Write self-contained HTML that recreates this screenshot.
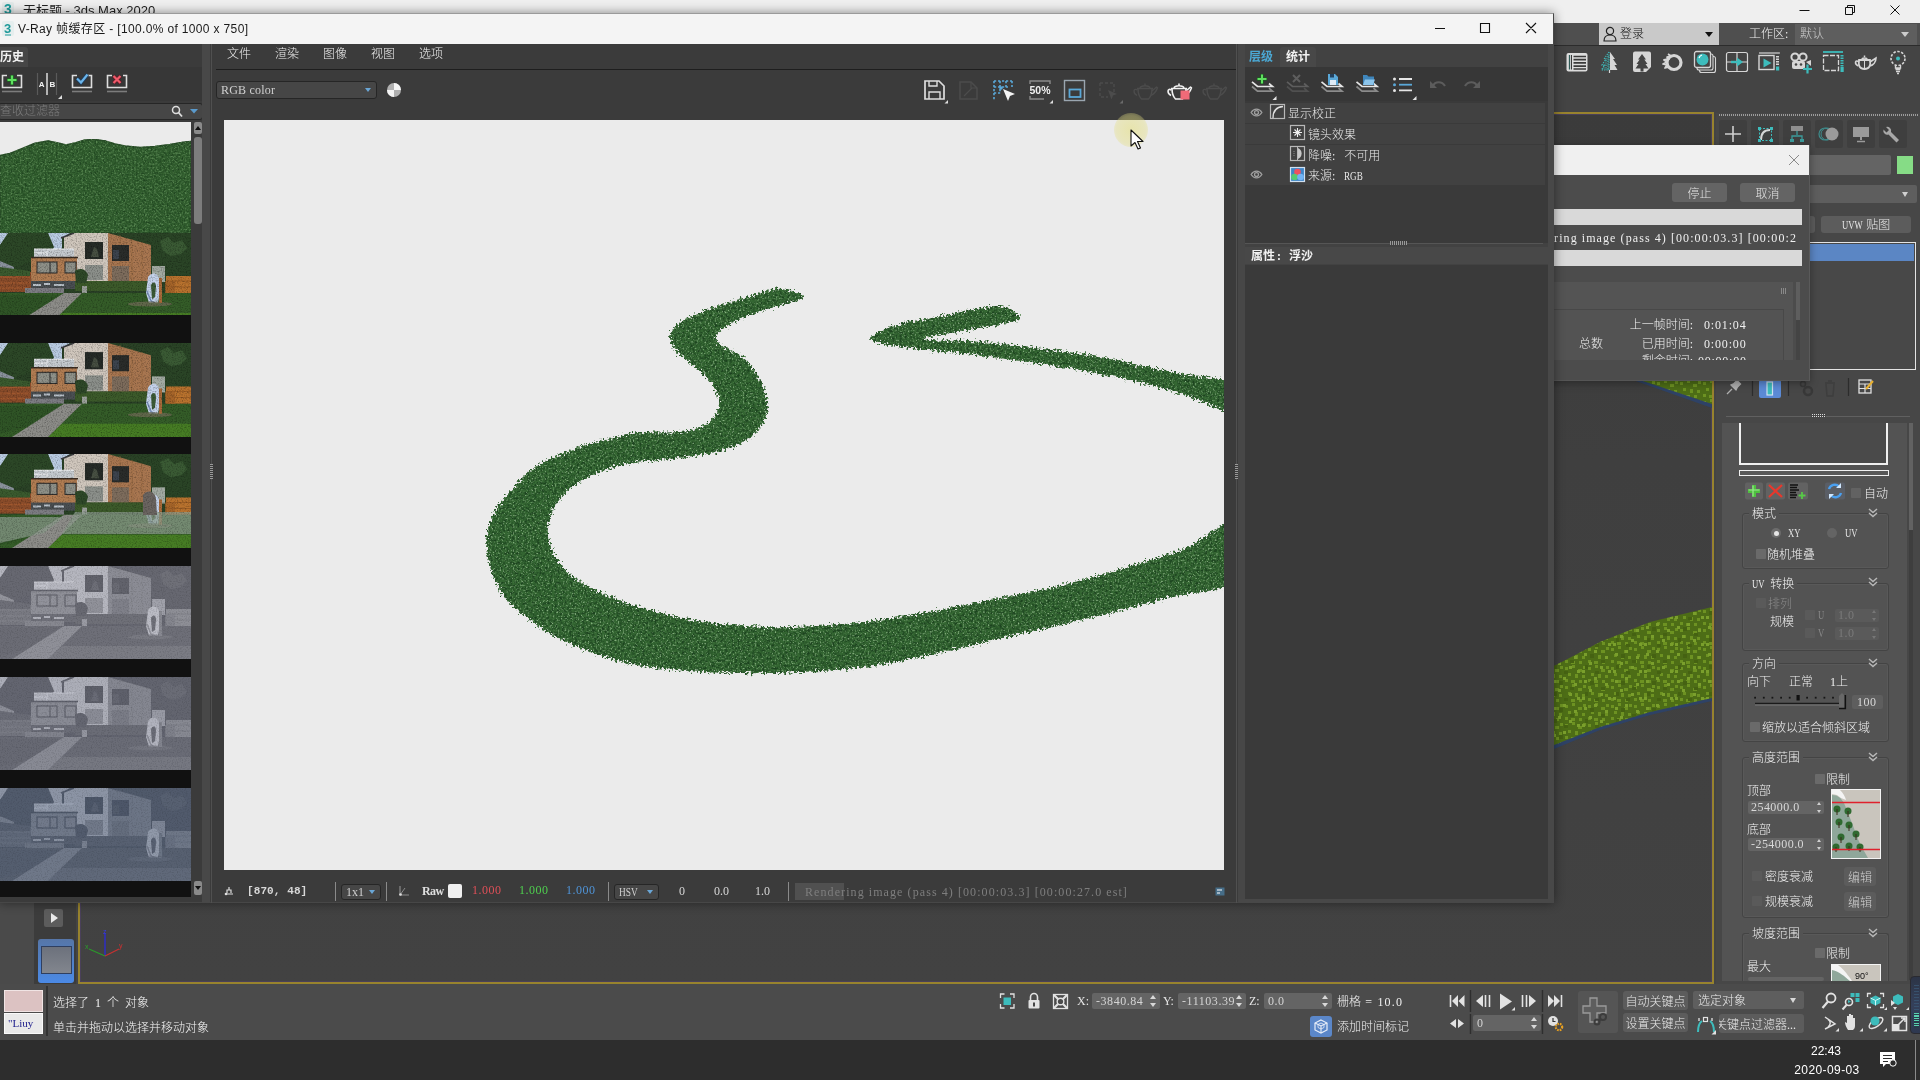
<!DOCTYPE html>
<html lang="zh-CN">
<head>
<meta charset="utf-8">
<title>V-Ray 帧缓存区</title>
<style>
*{box-sizing:border-box;margin:0;padding:0}
html,body{width:1920px;height:1080px;overflow:hidden;background:#444}
body{will-change:transform;position:relative;font:300 12px/14px "Liberation Serif","Noto Sans CJK SC",serif;color:#e6e6e6}
.a{position:absolute}
.t{position:absolute;white-space:nowrap;line-height:14px}
.ui{font-family:"Liberation Sans","Noto Sans CJK SC",sans-serif;font-weight:400}
svg{position:absolute;overflow:visible}
/* ---------- main 3ds max window ---------- */
#max{left:0;top:0;width:1920px;height:1040px;background:#444}
#mtitle{left:0;top:0;width:1920px;height:23px;background:#efefef}
#mmenu{left:0;top:23px;width:1920px;height:23px;background:#4f4f4f;border-bottom:1px solid #2c2c2c}
#mtool{left:0;top:46px;width:1920px;height:67px;background:#444}
#vp{left:78px;top:112px;width:1636px;height:872px;border:2px solid #98832e;box-shadow:inset 0 0 0 1px #4a405a;background:linear-gradient(#3b3b3b,#3f3f3f 40%,#424242)}
#cmd{left:1716px;top:113px;width:204px;height:868px;background:#444}
#status{left:0;top:984px;width:1920px;height:56px;background:#4b4b4b}
#taskbar{left:0;top:1040px;width:1920px;height:40px;background:#2d2d2d}

/* main top */
.wc{stroke:#111;stroke-width:1;fill:none}
#login{left:1599px;top:0px;width:120px;height:22px;background:#c9c9c9;color:#111}
#wsdd{left:1795px;top:1px;width:122px;height:21px;background:#5e5e5e}
.tb{position:absolute;top:50px;width:26px;height:26px}

/* command panel (page coords) */
#cp{left:0;top:0;width:0;height:0}
#cmd{background:#474747}
.grp{position:absolute;border:1px solid #444;border-radius:3px;box-shadow:inset 0 0 0 1px #595959}
.gl{position:absolute;white-space:nowrap;line-height:14px;background:#535353;padding:0 3px;color:#f0f0f0}
.cb{position:absolute;width:10px;height:10px;background:#6a6a6a;border-radius:1px}
.cb.d{background:#5a5a5a}
.sp{letter-spacing:.45px;position:absolute;background:#646464;border-radius:2px;color:#d8d8d8;line-height:13px;height:13px;padding-left:3px;font-size:12px;white-space:nowrap}
.sp.d{background:#5a5a5a;color:#7a7a7a}
.sp i{position:absolute;right:3px;width:0;height:0;border:2.5px solid transparent}
.sp i.u{top:1px;border-bottom:3px solid #d0d0d0;border-top:0}
.sp i.dn{bottom:1px;border-top:3px solid #d0d0d0;border-bottom:0}
.sp.d i.u{border-bottom-color:#777}.sp.d i.dn{border-top-color:#777}
.btn{position:absolute;background:#646464;border-radius:3px;text-align:center;color:#e8e8e8;white-space:nowrap}
.dis{color:#8a8a8a}

/* status (page coords via #st) */
#st{left:0;top:0;width:0;height:0}
.fld{letter-spacing:.55px;position:absolute;background:#646464;border-radius:2px;color:#d4d4d4;height:16px;line-height:16px;padding-left:4px;white-space:nowrap}
.fld i{position:absolute;right:4px;width:0;height:0;border:3px solid transparent}
.fld i.u{top:2px;border-bottom:4px solid #d8d8d8;border-top:0}
.fld i.dn{bottom:2px;border-top:4px solid #d8d8d8;border-bottom:0}

/* render progress dialog */
#dlg{left:1400px;top:145px;width:410px;height:236px;background:#4c4c4c;border-right:1px solid #5a5a5a;border-bottom:1px solid #555;box-shadow:0 2px 8px rgba(0,0,0,.35)}

#vray .t{color:#e4e4e4}
.vdd{position:absolute;background:#464646;border:1px solid #262626;border-radius:3px;color:#d0d0d0;line-height:14px;padding-left:4px;white-space:nowrap}
.vdd i{position:absolute;right:5px;top:5px;width:0;height:0;border:3.5px solid transparent;border-top:4.5px solid #6aa6d6;border-bottom:0}
.vsep{position:absolute;width:1px;background:#8a8a8a;top:868px;height:19px}
.lrow{position:absolute;left:1245px;width:300px;height:20px;background:#414141}
.cap{display:inline-block;transform:scaleX(.72);transform-origin:0 50%}
/* ---------- vray window ---------- */
#vray{left:-1px;top:13px;width:1555px;height:890px;background:#3b3b3b;border:1px solid #474747;border-top-color:#9a9a9a;box-shadow:0 0 10px rgba(0,0,0,.45)}
#vtitle{left:0;top:0;width:1553px;height:30px;background:#f4f4f4}
</style>
</head>
<body>
<div id="max" class="a">
  <div id="mtitle" class="a">
    <svg class="a" style="left:2px;top:2px" width="14" height="14" viewBox="0 0 14 14"><rect x="0" y="0" width="12" height="13" rx="2" fill="#e2e8e8"/><text x="2" y="12" font-family="Liberation Sans,sans-serif" font-weight="bold" font-size="14" fill="#1f9a9a">3</text></svg>
    <div class="t ui" style="left:23px;top:3px;font-size:13px;line-height:16px;color:#222">无标题 - 3ds Max 2020</div>
    <svg class="a" style="left:1790px;top:0" width="130" height="23" viewBox="0 0 130 23"><path class="wc" d="M9.5 10.5h10M55.5 7.5h7v7h-7zM57.5 7.5v-2h7v7h-2M100.500 5.500l9 9M109.500 5.500l-9 9"/></svg>
</div>
  <div id="mmenu" class="a">
    <div id="login" class="a"><svg class="a" style="left:4px;top:3px" width="14" height="16" viewBox="0 0 14 16"><circle cx="7" cy="5" r="3.6" fill="none" stroke="#222" stroke-width="1.2"/><path d="M1 15c0-4 2.500-6 6-6s6 2 6 6z" fill="none" stroke="#222" stroke-width="1.2"/></svg><div class="t" style="left:21px;top:4px">登录</div><div class="a" style="left:106px;top:9px;border:4px solid transparent;border-top:5px solid #111;border-bottom:0"></div></div>
    <div class="t" style="left:1749px;top:4px;color:#eee">工作区:</div>
    <div id="wsdd" class="a"><div class="t" style="left:5px;top:3px;color:#c8c8c8">默认</div><div class="a" style="left:106px;top:8px;border:4px solid transparent;border-top:5px solid #ccc;border-bottom:0"></div></div>
</div>
  <div id="mtool" class="a">
<svg class="a" style="left:1565px;top:4px" width="24" height="24" viewBox="0 0 24 24"><rect x="1.500" y="3" width="21" height="18.500" rx="2" fill="#dcdcdc"/><path d="M4.500 5v14.500" stroke="#2f5a56" stroke-width="1.300"/><path d="M6.500 5v14.500" stroke="#3a3a3a" stroke-width="1"/><path d="M8.500 6.500h12.500M8.500 9.700h12.500M8.500 12.900h12.500M8.500 16.100h12.500M8.500 19h12.500" stroke="#3a3a3a" stroke-width="1.700"/></svg>
<svg class="a" style="left:1597.5px;top:4px" width="24" height="24" viewBox="0 0 24 24"><path d="M12 2l5 7h-2l4 6h-2.500l3 5H12z" fill="#d6d6d6"/><path d="M11 2l-5 7h2l-4 6h2.500l-3 5H11z" fill="none" stroke="#3dbcbc" stroke-width="1.2" stroke-dasharray="1.2 1.200"/><path d="M10 6v14M8 10v10M6 15v5" stroke="#3dbcbc" stroke-width="1.2" stroke-dasharray="1.2 1.200"/><path d="M11.500 20v3" stroke="#d6d6d6" stroke-width="1.2"/></svg>
<svg class="a" style="left:1629.5px;top:4px" width="24" height="24" viewBox="0 0 24 24"><path d="M3 3.500a2 2 0 0 1 2-2h14a2 2 0 0 1 2 2V17l-5 5H5a2 2 0 0 1-2-2z" fill="#d6d6d6"/><path d="M12 4l4 5.500h-1.700l3.200 4.500h-2l3 4.500h-5v3h-3v-3h-5l3-4.500h-2l3.200-4.500H8z" fill="#444"/></svg>
<svg class="a" style="left:1661px;top:4px" width="24" height="24" viewBox="0 0 24 24"><circle cx="13" cy="12.500" r="7" fill="none" stroke="#d6d6d6" stroke-width="3.200"/><path d="M7 4l3 2-4 1 2 2-5 1 3 2-4 2 4 1-2 3 4-1" fill="none" stroke="#d6d6d6" stroke-width="1.8" stroke-linejoin="round"/></svg>
<svg class="a" style="left:1693px;top:4px" width="24" height="24" viewBox="0 0 24 24"><rect x="6.500" y="6.500" width="16" height="16" rx="2" fill="#444" stroke="#d6d6d6" stroke-width="1.1"/><rect x="4" y="4" width="16" height="16" rx="2" fill="#444" stroke="#d6d6d6" stroke-width="1.1"/><rect x="1.500" y="1.500" width="16" height="16" rx="2" fill="#444" stroke="#d6d6d6" stroke-width="1.3"/><circle cx="9.500" cy="9.500" r="6" fill="#3dbcbc"/><path d="M6 8a4 4 0 0 1 3-3" stroke="#fff" stroke-width="1.2" fill="none"/></svg>
<svg class="a" style="left:1725px;top:4px" width="24" height="24" viewBox="0 0 24 24"><rect x="1.500" y="2.500" width="21" height="19" rx="2" fill="none" stroke="#d6d6d6" stroke-width="1.2"/><path d="M12 2.500v19M1.500 12h21" stroke="#d6d6d6" stroke-width="1.200"/><path d="M6 12h8" stroke="#3dbcbc" stroke-width="2.400"/><path d="M12 7.500l6 4.500-6 4.500z" fill="#3dbcbc"/></svg>
<svg class="a" style="left:1757px;top:4px" width="24" height="24" viewBox="0 0 24 24"><path d="M2 3h21" stroke="#d6d6d6" stroke-width="1.200"/><rect x="2" y="5.500" width="15" height="14" fill="none" stroke="#d6d6d6" stroke-width="1.400"/><path d="M6.500 8.500l8 4.500-8 4.500z" fill="#3dbcbc"/><path d="M20.500 6v10" stroke="#d6d6d6" stroke-width="3" stroke-dasharray="1.5 1"/><rect x="19" y="16.500" width="3.200" height="4" fill="#3dbcbc"/></svg>
<svg class="a" style="left:1789px;top:4px" width="24" height="24" viewBox="0 0 24 24"><circle cx="6" cy="7" r="3.600" fill="none" stroke="#d6d6d6" stroke-width="2"/><circle cx="14" cy="7" r="3.600" fill="none" stroke="#d6d6d6" stroke-width="2"/><rect x="3" y="11" width="13" height="8" rx="2" fill="#d6d6d6"/><circle cx="7" cy="14.500" r="1.300" fill="#444"/><circle cx="12" cy="14.500" r="1.300" fill="#444"/><path d="M17 12l5-2v6z" fill="#d6d6d6"/><path d="M18.500 14.500v9M14 19h9" stroke="#3dbcbc" stroke-width="2.200"/></svg>
<svg class="a" style="left:1821px;top:4px" width="24" height="24" viewBox="0 0 24 24"><path d="M2 2h20" stroke="#3dbcbc" stroke-width="1.800"/><rect x="2.500" y="5.500" width="15" height="15" fill="none" stroke="#d6d6d6" stroke-width="1.300" stroke-dasharray="5 1.500"/><path d="M21 5v12" stroke="#3dbcbc" stroke-width="3" stroke-dasharray="1.5 1"/><rect x="19.500" y="17" width="3.200" height="5" fill="#3dbcbc"/></svg>
<svg class="a" style="left:1853px;top:4px" width="24" height="24" viewBox="0 0 24 24"><path d="M6 10h11c1 6-1 9-5.500 9S5 16 6 10z" fill="none" stroke="#d6d6d6" stroke-width="1.800"/><path d="M6 12c-4-3-5 2-0.500 4M17 12l6-4c0 4-3 7-6 8" fill="none" stroke="#d6d6d6" stroke-width="1.600"/><path d="M9 9.500c0-2 5-2 5 0M11.500 7v-1.500" stroke="#d6d6d6" stroke-width="1.500" fill="none"/><path d="M11.500 10v9" stroke="#d6d6d6" stroke-width="1"/></svg>
<svg class="a" style="left:1885.5px;top:4px" width="24" height="24" viewBox="0 0 24 24"><circle cx="12" cy="8.500" r="7" fill="none" stroke="#d6d6d6" stroke-width="1.600" stroke-dasharray="2.5 1.500"/><circle cx="12" cy="8.500" r="2" fill="#3dbcbc"/><path d="M9.500 15v3h5v-3M9.500 19.500h5M10 21.500h4M11 23.500h2" stroke="#d6d6d6" stroke-width="1.400" fill="none"/></svg>
</div>
  <div id="vp" class="a"></div>
  <div id="cmd" class="a"></div>
  <svg class="a" style="left:1554px;top:113px;overflow:hidden" width="158" height="868" viewBox="1554 113 158 868">
<defs><pattern id="px" width="23" height="19" patternUnits="userSpaceOnUse"><rect width="23" height="19" fill="#4d6d16"/><g fill="#6d9222"><rect x="1" y="2" width="3" height="3"/><rect x="8" y="0" width="3" height="3"/><rect x="14" y="4" width="4" height="3"/><rect x="19" y="1" width="3" height="3"/><rect x="4" y="8" width="3" height="3"/><rect x="11" y="9" width="3" height="4"/><rect x="18" y="10" width="3" height="3"/><rect x="1" y="14" width="3" height="3"/><rect x="7" y="15" width="4" height="3"/><rect x="15" y="15" width="3" height="3"/></g></pattern><pattern id="px2" width="31" height="27" patternUnits="userSpaceOnUse"><g fill="#7a9f2c"><rect x="3" y="5" width="3" height="3"/><rect x="13" y="2" width="3" height="3"/><rect x="24" y="8" width="3" height="3"/><rect x="8" y="14" width="3" height="3"/><rect x="19" y="18" width="3" height="3"/><rect x="27" y="22" width="3" height="3"/><rect x="1" y="22" width="3" height="3"/></g><g fill="#456212"><rect x="9" y="6" width="4" height="4"/><rect x="20" y="12" width="4" height="3"/><rect x="4" y="17" width="3" height="4"/><rect x="14" y="23" width="4" height="3"/></g></pattern></defs>
<path d="M1554 670l46-26 50-21 62-14v92l-62 14-50 15-46 19z" fill="#2e4266"/>
<path d="M1554 666l46-24 50-20 62-15v91l-62 14-50 15-46 18z" fill="url(#px)"/><path d="M1554 666l46-24 50-20 62-15v91l-62 14-50 15-46 18z" fill="url(#px2)"/>
<path d="M1633 380h79v28z" fill="#2e4266"/><path d="M1640 380h72v24z" fill="url(#px)"/>
</svg>
<div id="cp" class="a">
<div class="a" style="left:1719px;top:114px;width:199px;height:2px;background:repeating-linear-gradient(90deg,#9c9c9c 0 1px,#474747 1px 2px)"></div>
<div class="a" style="left:1719px;top:120px;width:28px;height:28px;background:#3f3f3f;border-radius:2px"></div><div class="a" style="left:1751px;top:120px;width:28px;height:28px;background:#3f3f3f;border-radius:2px"></div><div class="a" style="left:1783px;top:120px;width:28px;height:28px;background:#3f3f3f;border-radius:2px"></div><div class="a" style="left:1815px;top:120px;width:28px;height:28px;background:#3f3f3f;border-radius:2px"></div><div class="a" style="left:1847px;top:120px;width:28px;height:28px;background:#3f3f3f;border-radius:2px"></div><div class="a" style="left:1879px;top:120px;width:28px;height:28px;background:#3f3f3f;border-radius:2px"></div>
<svg class="a" style="left:1720px;top:120px" width="190" height="28" viewBox="1720 120 190 28">
<path d="M1733 126v16M1725 134h16" stroke="#cfcfcf" stroke-width="1.6"/>
<rect x="1759.500" y="128.500" width="12" height="12" fill="none" stroke="#3dbcbc" stroke-width="1" stroke-dasharray="2 1.500"/><path d="M1761 140c0-6 3-10 9-10" fill="none" stroke="#d6d6d6" stroke-width="2"/><path d="M1758 127h3v3h-3zM1770 127h3v3h-3zM1758 139h3v3h-3zM1770 139h3v3h-3z" fill="#3dbcbc"/>
<rect x="1791" y="126" width="12" height="5" fill="#8e8e8e"/><path d="M1797 131v4M1792 140v-4h10v4" fill="none" stroke="#3d9c9c" stroke-width="1.300"/><rect x="1790" y="139" width="4" height="3" fill="#3d9c9c"/><rect x="1800" y="139" width="4" height="3" fill="#3d9c9c"/>
<circle cx="1825" cy="134" r="6" fill="none" stroke="#3d8c8c" stroke-width="1.200"/><circle cx="1827" cy="134" r="6" fill="none" stroke="#3d8c8c" stroke-width="1"/><circle cx="1832" cy="134" r="6.500" fill="#9a9a9a"/>
<rect x="1853" y="127" width="16" height="10" fill="#9a9a9a"/><path d="M1857 141.500h8" stroke="#9a9a9a" stroke-width="1.500"/><path d="M1861 137v3" stroke="#9a9a9a" stroke-width="2"/>
<path d="M1886 127a4 4 0 0 1 5 5l8 8-2.500 2.500-8-8a4 4 0 0 1-5-5l3 3 2.500-2.500z" fill="#a8a8a8"/>
</svg>
<div class="a" style="left:1724px;top:155px;width:167px;height:20px;background:#646464;border-radius:2px"></div>
<div class="a" style="left:1897px;top:156px;width:16px;height:18px;background:#86dc86"></div>
<div class="a" style="left:1724px;top:185px;width:193px;height:18px;background:#5e5e5e;border-radius:2px"><div class="a" style="left:178px;top:7px;border:3.5px solid transparent;border-top:5px solid #d0d0d0;border-bottom:0"></div></div>
<div class="btn" style="left:1724px;top:216px;width:91px;height:17px;background:#5c5c5c"></div>
<div class="btn" style="left:1821px;top:216px;width:90px;height:17px;background:#5c5c5c;line-height:19px"><span class="cap" style="margin-right:-7px">UVW</span> 贴图</div>
<div class="a" style="left:1724px;top:242px;width:192px;height:128px;background:#484848;border:1px solid #e4e4e4"><div class="a" style="left:1px;top:1px;width:188px;height:17px;background:#5b86c4"></div></div>
<svg class="a" style="left:1720px;top:376px" width="190" height="26" viewBox="1720 376 190 26">
<path d="M1727 394l5-5M1731 385l5 5 1.500-3 3-3-3.500-3.500-3 3z" stroke="#b0b0b0" stroke-width="1.300" fill="#b0b0b0"/>
<path d="M1752.500 378v18M1788.500 378v18M1848.500 378v18" stroke="#2c2c2c" stroke-width="1.200"/>
<rect x="1759" y="379.500" width="22" height="18.500" rx="2" fill="#5b8ad6"/><rect x="1767" y="382" width="5.500" height="13" fill="#3dbcbc" stroke="#cfe0f0" stroke-width="1.200"/>
<circle cx="1803" cy="384" r="2.500" fill="none" stroke="#383838" stroke-width="1.500"/><circle cx="1808" cy="391" r="4" fill="none" stroke="#383838" stroke-width="2.500"/>
<path d="M1825 383h10M1826 384l1 12h6l1-12M1828 381h4" stroke="#3e3e3e" stroke-width="1.500" fill="none"/>
<rect x="1859" y="380" width="12" height="13" fill="none" stroke="#e0e0e0" stroke-width="1.300"/><path d="M1859 384h12M1865 384v9M1859 388.500h12" stroke="#e0e0e0" stroke-width="1.200"/><path d="M1866 389l7-8" stroke="#e8b030" stroke-width="2"/>
</svg>
<div class="a" style="left:1726px;top:416px;width:184px;height:1px;background:#606060"></div>
<div class="a" style="left:1811px;top:413px;width:15px;height:5px;background:#474747"><div class="a" style="left:1px;top:1px;width:13px;height:0;border-top:1px dotted #ddd"></div><div class="a" style="left:1px;top:3px;width:13px;height:0;border-top:1px dotted #ddd"></div></div>
<div class="a" style="left:1722px;top:423px;width:185px;height:558px;background:#535353"></div>
<div class="a" style="left:1909px;top:423px;width:4px;height:107px;background:#626262"></div>
<div class="a" style="left:1909px;top:530px;width:4px;height:450px;background:#3e3e3e"></div>
<div class="a" style="left:1739px;top:423px;width:149px;height:42px;background:#4a4a4a;border:2px solid #f0f0f0;border-top:0"></div>
<div class="a" style="left:1739px;top:470px;width:150px;height:6px;background:#585858;border:1px solid #f0f0f0"></div>
<svg class="a" style="left:1744px;top:482px" width="104" height="18" viewBox="1744 482 104 18">
<rect x="1745" y="482.500" width="18" height="17" rx="2" fill="#626262"/><path d="M1754 485v12M1748 491h12" stroke="#4fc040" stroke-width="4"/><path d="M1753 485.500v11M1748.500 490h11" stroke="#9be890" stroke-width="1.200"/>
<rect x="1766" y="482.500" width="19" height="17" rx="2" fill="#626262"/><path d="M1769 485l13 12M1782 485l-13 12" stroke="#e8382c" stroke-width="2.200"/>
<rect x="1788" y="482.500" width="20" height="17" rx="2" fill="#626262"/><path d="M1790 485h8M1790 487.500h7M1790 490h9M1790 492.500h6M1790 495h7M1790 497.500h6" stroke="#111" stroke-width="1.300"/><path d="M1802 492v7M1798.500 495.500h7" stroke="#58c848" stroke-width="1.800"/>
<rect x="1825" y="482.500" width="20" height="17" rx="2" fill="#5a5e66"/><path d="M1829 489a6 6 0 0 1 10-2.500" fill="none" stroke="#4aa0f0" stroke-width="2.400"/><path d="M1841 493a6 6 0 0 1-10 2.500" fill="none" stroke="#4aa0f0" stroke-width="2.400"/><path d="M1841 483v5h-5zM1829 499v-5h5z" fill="#d0e8ff"/>
</svg>
<div class="cb" style="left:1851px;top:488px;background:#626262"></div><div class="t" style="left:1864px;top:487px;color:#f0f0f0">自动</div>
<div class="grp" style="left:1742px;top:513px;width:147px;height:56px"></div><div class="gl" style="left:1749px;top:507px">模式</div><svg class="a" style="left:1868px;top:508px" width="10" height="10" viewBox="0 0 10 10"><path d="M1 1l4 3.500 4-3.500M1 5l4 3.500 4-3.500" fill="none" stroke="#b8b8b8" stroke-width="1.5"/></svg>
<div class="a" style="left:1771px;top:528px;width:10px;height:10px;border-radius:5px;background:#6c6c6c"><div class="a" style="left:2.5px;top:2.5px;width:5px;height:5px;border-radius:3px;background:#e6e6e6"></div></div><div class="t" style="left:1788px;top:526px"><span class="cap">XY</span></div>
<div class="a" style="left:1827px;top:528px;width:10px;height:10px;border-radius:5px;background:#646464"></div><div class="t" style="left:1845px;top:526px"><span class="cap">UV</span></div>
<div class="cb" style="left:1756px;top:549px"></div><div class="t" style="left:1767px;top:548px;color:#f0f0f0">随机堆叠</div>
<div class="grp" style="left:1742px;top:583px;width:147px;height:68px"></div><div class="gl" style="left:1749px;top:577px"><span class="cap" style="margin-right:-2px">UV</span> 转换</div><svg class="a" style="left:1868px;top:577px" width="10" height="10" viewBox="0 0 10 10"><path d="M1 1l4 3.500 4-3.500M1 5l4 3.500 4-3.500" fill="none" stroke="#b8b8b8" stroke-width="1.5"/></svg>
<div class="cb d" style="left:1756px;top:598px"></div><div class="t dis" style="left:1768px;top:597px">排列</div>
<div class="t" style="left:1770px;top:615px;color:#f0f0f0">规模</div>
<div class="cb d" style="left:1805px;top:610px"></div><div class="t dis" style="left:1818px;top:608px"><span class="cap">U</span></div><div class="sp d" style="left:1835px;top:609px;width:44px">1.0<i class="u"></i><i class="dn"></i></div>
<div class="cb d" style="left:1805px;top:628px"></div><div class="t dis" style="left:1818px;top:626px"><span class="cap">V</span></div><div class="sp d" style="left:1835px;top:627px;width:44px">1.0<i class="u"></i><i class="dn"></i></div>
<div class="grp" style="left:1742px;top:663px;width:147px;height:79px"></div><div class="gl" style="left:1749px;top:657px">方向</div><svg class="a" style="left:1868px;top:658px" width="10" height="10" viewBox="0 0 10 10"><path d="M1 1l4 3.500 4-3.500M1 5l4 3.500 4-3.500" fill="none" stroke="#b8b8b8" stroke-width="1.5"/></svg>
<div class="t" style="left:1747px;top:675px;color:#f0f0f0;background:#535353">向下</div><div class="t" style="left:1789px;top:675px;color:#f0f0f0">正常</div><div class="t" style="left:1830px;top:675px;color:#f0f0f0">1上</div>
<svg class="a" style="left:1750px;top:690px" width="100" height="22" viewBox="1750 690 100 22"><rect x="1754.2" y="696.800" width="1.800" height="1.800" fill="#161616"/><rect x="1762.9" y="696.800" width="1.800" height="1.800" fill="#161616"/><rect x="1771.5" y="696.800" width="1.800" height="1.800" fill="#161616"/><rect x="1780.2" y="696.800" width="1.800" height="1.800" fill="#161616"/><rect x="1788.8" y="696.800" width="1.800" height="1.800" fill="#161616"/><rect x="1806.2" y="696.800" width="1.800" height="1.800" fill="#161616"/><rect x="1814.8" y="696.800" width="1.800" height="1.800" fill="#161616"/><rect x="1823.5" y="696.800" width="1.800" height="1.800" fill="#161616"/><rect x="1832.1" y="696.800" width="1.800" height="1.800" fill="#161616"/><rect x="1796.500" y="695" width="3.200" height="5.500" fill="#111"/><path d="M1755 703.500h85" stroke="#1a1a1a" stroke-width="1.400"/><path d="M1755 705h85" stroke="#7a7a7a" stroke-width="1"/><path d="M1839 696l3-3 3 3v12.500h-6z" fill="#686868"/><path d="M1845.300 695v13.500h-6.300" fill="none" stroke="#111" stroke-width="1.600"/></svg>
<div class="sp" style="left:1852px;top:695px;width:31px;height:14px;line-height:14px;text-align:left;padding-left:5px;background:#5e5e5e">100</div>
<div class="cb" style="left:1750px;top:722px"></div><div class="t" style="left:1762px;top:721px;color:#f0f0f0">缩放以适合倾斜区域</div>
<div class="grp" style="left:1742px;top:757px;width:147px;height:161px"></div><div class="gl" style="left:1749px;top:751px">高度范围</div><svg class="a" style="left:1868px;top:752px" width="10" height="10" viewBox="0 0 10 10"><path d="M1 1l4 3.500 4-3.500M1 5l4 3.500 4-3.500" fill="none" stroke="#b8b8b8" stroke-width="1.5"/></svg>
<div class="cb" style="left:1815px;top:774px"></div><div class="t" style="left:1826px;top:773px;color:#f0f0f0">限制</div>
<div class="t" style="left:1747px;top:784px;color:#f0f0f0;background:#535353">顶部</div><div class="sp" style="left:1748px;top:801px;width:76px">254000.0<i class="u"></i><i class="dn"></i></div>
<div class="t" style="left:1747px;top:823px;color:#f0f0f0;background:#535353">底部</div><div class="sp" style="left:1748px;top:838px;width:76px">-254000.0<i class="u"></i><i class="dn"></i></div>
<svg class="a" style="left:1831px;top:789px" width="50" height="70" viewBox="0 0 50 70"><rect x=".5" y=".5" width="49" height="69" fill="#c9c5bd" stroke="#f4f4f4"/><path d="M1 6c6 0 9 3 12 8l8 20c3 8 6 18 12 28l4 7H1z" fill="#8fa79a"/><path d="M1 1h8c3 3 5 6 6 10l-5-2-4-3-5-1z" fill="#f4f4f4"/><g fill="#2f6a30"><circle cx="6" cy="20" r="3.500"/><circle cx="17" cy="22" r="3.500"/><circle cx="8" cy="33" r="3.500"/><circle cx="18" cy="36" r="3.500"/><circle cx="25" cy="45" r="3.500"/><circle cx="10" cy="48" r="3.500"/><circle cx="5" cy="58" r="3.500"/><circle cx="18" cy="57" r="3.500"/><circle cx="29" cy="58" r="3.500"/></g><path d="M6 20v6M17 22v6M8 33v6M18 36v6M25 45v6M10 48v6M5 58v5M18 57v5M29 58v5" stroke="#3a2a1a" stroke-width="1"/><path d="M1 13.500h48M1 60.500h48" stroke="#e0202c" stroke-width="1.300"/></svg>
<div class="cb d" style="left:1752px;top:871px"></div><div class="t" style="left:1765px;top:870px;color:#f0f0f0">密度衰减</div><div class="btn" style="left:1844px;top:867px;width:32px;height:19px;line-height:22px;background:#5c5c5c;color:#cfcfcf">编辑</div>
<div class="cb d" style="left:1752px;top:896px"></div><div class="t" style="left:1765px;top:895px;color:#f0f0f0">规模衰减</div><div class="btn" style="left:1844px;top:892px;width:32px;height:19px;line-height:22px;background:#5c5c5c;color:#cfcfcf">编辑</div>
<div class="grp" style="left:1742px;top:933px;width:147px;height:60px;border-bottom:0"></div><div class="gl" style="left:1749px;top:927px">坡度范围</div><svg class="a" style="left:1868px;top:928px" width="10" height="10" viewBox="0 0 10 10"><path d="M1 1l4 3.500 4-3.500M1 5l4 3.500 4-3.500" fill="none" stroke="#b8b8b8" stroke-width="1.5"/></svg>
<div class="cb" style="left:1815px;top:948px"></div><div class="t" style="left:1826px;top:947px;color:#f0f0f0">限制</div>
<div class="t" style="left:1747px;top:960px;color:#f0f0f0;background:#535353">最大</div>
<div class="sp" style="left:1748px;top:977px;width:76px;height:4px"></div>
<svg class="a" style="left:1831px;top:964px" width="50" height="17" viewBox="0 0 50 17"><rect x=".5" y=".5" width="49" height="20" fill="#c9c5bd" stroke="#f4f4f4"/><path d="M1 1h6c4 3 8 7 14 16H1z" fill="#f4f4f4"/><path d="M1 6c8 2 12 6 18 11H1z" fill="#8fa79a"/><text x="24" y="15" font-family="Liberation Sans,sans-serif" font-size="9" fill="#111">90°</text></svg>
<div class="a" style="left:1716px;top:981px;width:204px;height:4px;background:#474747"></div>
</div>
  <div id="status" class="a"></div>
</div>
<div id="st" class="a">
<div class="a" style="left:0;top:900px;width:34px;height:84px;background:#4a4a4a"></div>
<div class="a" style="left:34px;top:900px;width:42px;height:84px;background:#3c3c3c"></div>
<div class="a" style="left:44px;top:909px;width:19px;height:18px;background:#5c5c5c;border-radius:2px"><div class="a" style="left:7px;top:4px;border:5px solid transparent;border-left:7px solid #e8e8e8;border-right:0"></div></div>
<div class="a" style="left:38px;top:939px;width:36px;height:44px;background:linear-gradient(#5676a8,#4b8ae6);border-radius:3px"><div class="a" style="left:3px;top:7px;width:31px;height:28px;background:linear-gradient(#6c717c,#82868e);border:1px solid #2f3f60"></div></div>
<svg class="a" style="left:80px;top:925px" width="50" height="40" viewBox="80 925 50 40"><path d="M105 956V933" stroke="#2a2ad8" stroke-width="1.300"/><path d="M105 956l-16-7" stroke="#2a9a2a" stroke-width="1.200"/><path d="M105 956l14-7" stroke="#c83030" stroke-width="1.200"/><text x="103" y="934" font-size="7" fill="#3a3ae0" font-family="Liberation Sans,sans-serif">z</text><text x="85" y="949" font-size="7" fill="#2aa02a" font-family="Liberation Sans,sans-serif">x</text><text x="119" y="948" font-size="7" fill="#d03030" font-family="Liberation Sans,sans-serif">y</text></svg>
<div class="a" style="left:4px;top:990px;width:39px;height:22px;background:#dcc2c2;border:1px solid #f0e4e4"></div>
<div class="a" style="left:4px;top:1013px;width:39px;height:21px;background:#e9e9e9;border:1px solid #fafafa;overflow:hidden;color:#1a1a8a;font-size:11px"><div class="t" style="left:3px;top:2px;font-size:11px">"Liuy</div></div>
<div class="a" style="left:46px;top:986px;width:2px;height:50px;background:#333"></div>
<div class="t" style="left:53px;top:996px;color:#f4f4f4;word-spacing:3px">选择了 1 个 对象</div>
<div class="t" style="left:53px;top:1021px;color:#f4f4f4">单击并拖动以选择并移动对象</div>
<svg class="a" style="left:998px;top:990px" width="74" height="22" viewBox="998 990 74 22">
<path d="M1000.500 998v-4h4M1010 994h4v4M1014 1004v4h-4M1004.500 1008h-4v-4" fill="none" stroke="#e2e2e2" stroke-width="1.300"/><rect x="1003.500" y="997.500" width="7.500" height="7.500" fill="#3dbcbc"/>
<rect x="1028.500" y="1000" width="11" height="8.500" rx="1" fill="#e2e2e2"/><path d="M1030.500 1000v-3a3.500 3.500 0 0 1 7 0v3" fill="none" stroke="#e2e2e2" stroke-width="1.600"/><rect x="1033" y="1002.500" width="2" height="4" fill="#444"/>
<rect x="1053.500" y="994.500" width="14" height="14" fill="none" stroke="#e2e2e2" stroke-width="1.300"/><circle cx="1060.500" cy="1001.500" r="3.300" fill="none" stroke="#e2e2e2" stroke-width="1.400"/><path d="M1054 995l4 4M1067 995l-4 4M1054 1008l4-4M1067 1008l-4-4" stroke="#e2e2e2" stroke-width="2.200"/>
</svg>
<div class="t" style="left:1077px;top:994px">X:</div><div class="fld" style="left:1092px;top:993px;width:68px">-3840.84<i class="u"></i><i class="dn"></i></div>
<div class="t" style="left:1163px;top:994px">Y:</div><div class="fld" style="left:1178px;top:993px;width:68px">-11103.39<i class="u"></i><i class="dn"></i></div>
<div class="t" style="left:1249px;top:994px">Z:</div><div class="fld" style="left:1264px;top:993px;width:68px">0.0<i class="u"></i><i class="dn"></i></div>
<div class="t" style="left:1337px;top:995px;color:#f0f0f0">栅格<span style="letter-spacing:1.2px"> = 10.0</span></div>
<div class="a" style="left:1310px;top:1016px;width:22px;height:21px;background:#5b87c9;border-radius:3px"><svg class="a" style="left:3px;top:3px" width="16" height="15" viewBox="0 0 16 15"><path d="M8 1l6 3v7l-6 3-6-3V4z" fill="none" stroke="#e8eef8" stroke-width="1.200"/><path d="M2 4l6 3 6-3M8 7v7" fill="none" stroke="#e8eef8" stroke-width="1.100"/><path d="M5 5.500l3-1.500 3 1.500v3l-3 1.500-3-1.500z" fill="none" stroke="#e8eef8" stroke-width=".8"/></svg></div>
<div class="t" style="left:1337px;top:1020px;color:#f0f0f0">添加时间标记</div>
<svg class="a" style="left:1446px;top:988px" width="124" height="48" viewBox="1446 988 124 48">
<path d="M1450.500 995v12" stroke="#e2e2e2" stroke-width="1.600"/><path d="M1458 995v12l-6-6zM1464.500 995v12l-6-6z" fill="#e2e2e2"/>
<path d="M1470.500 990v22M1542.500 990v22" stroke="#2e2e2e" stroke-width="1.400"/>
<path d="M1483 995v12l-7-6z" fill="#e2e2e2"/><path d="M1485.500 995v12M1489.500 995v12" stroke="#e2e2e2" stroke-width="1.600"/>
<path d="M1500 993.500v16l12-8z" fill="#e2e2e2"/><path d="M1515 1007v3.500h-3.500z" fill="#e2e2e2"/>
<path d="M1522.500 995v12M1526.500 995v12" stroke="#e2e2e2" stroke-width="1.600"/><path d="M1529 995v12l7-6z" fill="#e2e2e2"/>
<path d="M1548 995v12l6-6zM1554 995v12l6-6z" fill="#e2e2e2"/><path d="M1561.500 995v12" stroke="#e2e2e2" stroke-width="1.600"/>
<path d="M1456 1019v9l-6-4.500zM1458 1019v9l6-4.500z" fill="#e2e2e2"/>
<path d="M1470.500 1014v20M1542.500 1014v20" stroke="#2e2e2e" stroke-width="1.400"/>
<circle cx="1553" cy="1021" r="5" fill="#e2e2e2"/><path d="M1553 1018v3.500h2.500" stroke="#333" stroke-width="1.200" fill="none"/><circle cx="1559" cy="1027" r="3.200" fill="none" stroke="#e8a020" stroke-width="2.200" stroke-dasharray="1.6 1"/>
</svg>
<div class="fld" style="left:1473px;top:1015px;width:68px;height:16px">0<i class="u"></i><i class="dn"></i></div>
<div class="a" style="left:1578px;top:991px;width:40px;height:42px;background:#555;border-radius:3px"><svg class="a" style="left:4px;top:5px" width="32" height="32" viewBox="0 0 32 32"><path d="M8 2h7v8h9v7h-9v9H8v-9H1v-7h7z" fill="#5e5e5e" stroke="#9a9a9a" stroke-width="1.300"/><circle cx="21" cy="21" r="3" fill="none" stroke="#3c3c3c" stroke-width="2"/><circle cx="15" cy="26" r="2.500" fill="none" stroke="#3c3c3c" stroke-width="2"/><path d="M19 23l-2 2" stroke="#3c3c3c" stroke-width="2"/></svg></div>
<div class="btn" style="left:1623px;top:991px;width:65px;height:19px;line-height:22px;background:#5c5c5c">自动关键点</div>
<div class="btn" style="left:1623px;top:1013px;width:65px;height:19px;line-height:22px;background:#5c5c5c">设置关键点</div>
<div class="a" style="left:1693px;top:991px;width:111px;height:18px;background:#5e5e5e;border-radius:2px"><div class="t" style="left:5px;top:3px;color:#e8e8e8">选定对象</div><div class="a" style="left:97px;top:7px;border:3.5px solid transparent;border-top:5px solid #d8d8d8;border-bottom:0"></div></div>
<svg class="a" style="left:1695px;top:1015px" width="22" height="20" viewBox="0 0 22 20"><path d="M3 17c0-6 1-9 4-11M19 17c0-6-1-9-4-11" fill="none" stroke="#3dbcbc" stroke-width="2"/><rect x="8.500" y="2.500" width="4" height="4" fill="none" stroke="#e2e2e2" stroke-width="1.200"/><path d="M4 3v3M17 3v3" stroke="#e2e2e2" stroke-width="1.300"/><path d="M21 15v4.500h-4.500z" fill="#e2e2e2"/></svg>
<div class="btn" style="left:1719px;top:1014px;width:85px;height:19px;line-height:22px;background:#5c5c5c;overflow:hidden;text-align:left;text-indent:-4px">关键点过滤器...</div>
<svg class="a" style="left:1818px;top:988px" width="92" height="50" viewBox="1818 988 92 50">
<circle cx="1831" cy="998" r="4.500" fill="none" stroke="#e2e2e2" stroke-width="1.800"/><path d="M1828 1001.500l-5.500 6.500" stroke="#e2e2e2" stroke-width="2.200"/>
<circle cx="1849" cy="1002" r="3.500" fill="none" stroke="#e2e2e2" stroke-width="1.600"/><path d="M1846.500 1005l-4 4.500" stroke="#e2e2e2" stroke-width="2"/><rect x="1850.500" y="993" width="4" height="4" fill="#3dbcbc"/><rect x="1855.500" y="993" width="4" height="4" fill="#3dbcbc"/><rect x="1855.500" y="998" width="4" height="4" fill="#3dbcbc"/><path d="M1848 1000l3 1.500-3 1.500z" fill="#3dbcbc"/>
<path d="M1867.500 997v-3.500h3.500M1880 993.500h3.500v3.500M1883.500 1004v3.500h-3.500M1871 1007.500h-3.500v-3.500" fill="none" stroke="#e2e2e2" stroke-width="1.300"/><path d="M1875.500 995.500l5 2.500v5l-5 2.500-5-2.500v-5z" fill="#3dbcbc"/><path d="M1870.500 998l5 2.500 5-2.500M1875.500 1000.500v5" stroke="#dff" stroke-width=".9" fill="none"/><path d="M1887 1007v3h-3z" fill="#e2e2e2"/>
<path d="M1898 994l5 2.500v6l-5 2.500-5-2.500v-6z" fill="#3dbcbc"/><path d="M1891 1000l4 3-4 3zM1893 1007h4l-2 3z" fill="#e2e2e2"/><path d="M1909 1007v3h-3z" fill="#e2e2e2"/>
<path d="M1825 1017l10 7-10 5M1828 1019.500c3 2 3 5 0 7.500" fill="none" stroke="#e2e2e2" stroke-width="1.500"/><path d="M1839 1028v3.500h-3.500z" fill="#e2e2e2"/>
<path d="M1848 1030c-2-3-3-6-3-8l2 1v-7h2v6-8h2v8-7h2v8-5h2v8c0 2-1 3-2 4z" fill="#e2e2e2"/><path d="M1863 1028v3.500h-3.500z" fill="#e2e2e2"/>
<ellipse cx="1876" cy="1023" rx="8" ry="3.500" transform="rotate(-35 1876 1023)" fill="none" stroke="#e2e2e2" stroke-width="1.500"/><circle cx="1875" cy="1021" r="4.500" fill="#3dbcbc"/><path d="M1887 1028v3.500h-3.500z" fill="#e2e2e2"/>
<rect x="1892.500" y="1016.500" width="14" height="14" fill="none" stroke="#e2e2e2" stroke-width="1.500"/><rect x="1893" y="1024" width="6.500" height="6.500" fill="#e2e2e2"/><path d="M1898 1025l7-7M1901 1018h4v4" stroke="#e2e2e2" stroke-width="1.500" fill="none"/>
</svg>
<div class="a" style="left:1910px;top:976px;width:12px;height:58px;background:linear-gradient(#2c3446,#34405a 50%,#2e3850);border-radius:4px 0 0 4px;border:1px solid #2a2a30"></div>
<div class="a" style="left:1914px;top:985px;width:5px;height:26px;background:repeating-linear-gradient(#3a5a78 0 1px,transparent 1px 3px);opacity:.7"></div><div class="a" style="left:1914px;top:1013px;width:5px;height:15px;background:repeating-linear-gradient(#58d0b0 0 1px,#2a3a4a 1px 2.5px)"></div>
</div>
<div id="dlg" class="a">
<div class="a" style="left:0;top:0;width:409px;height:30px;background:#f0f0f0"></div>
<svg class="a" style="left:388px;top:9px" width="12" height="12" viewBox="0 0 12 12"><path d="M1 1l10 10M11 1L1 11" stroke="#8a8a8a" stroke-width="1"/></svg>
<div class="btn" style="left:272px;top:38px;width:55px;height:19px;line-height:23px;background:#646464;color:#e0e0e0">停止</div>
<div class="btn" style="left:340px;top:38px;width:55px;height:19px;line-height:23px;background:#646464;color:#e0e0e0">取消</div>
<div class="a" style="left:0;top:64px;width:402px;height:16px;background:#d9d9d9"></div>
<div class="t" style="left:118px;top:86px;color:#f0f0f0;width:279px;overflow:hidden;letter-spacing:1.08px">Rendering image (pass 4) [00:00:03.3] [00:00:27.0 est]</div>
<div class="a" style="left:0;top:105px;width:402px;height:16px;background:#d9d9d9"></div>
<div class="a" style="left:0;top:137px;width:393px;height:78px;background:#545454"></div>
<div class="a" style="left:381px;top:143px;width:6px;height:6px;background:repeating-linear-gradient(90deg,#8a8a8a 0 1px,transparent 1px 2px)"></div>
<div class="a" style="left:396px;top:137px;width:4px;height:78px;background:#444"></div><div class="a" style="left:396px;top:137px;width:4px;height:38px;background:#5e5e5e"></div>
<div class="a" style="left:0;top:164px;width:384px;height:52px;background:#535353;border:1px solid #484848;border-bottom:0"></div>
<div class="t" style="left:179px;top:192px;color:#f0f0f0">总数</div>
<div class="t" style="left:213px;top:173px;width:80px;text-align:right;color:#f0f0f0">上一帧时间:</div><div class="t" style="left:304px;top:173px;color:#f0f0f0;letter-spacing:.83px">0:01:04</div>
<div class="t" style="left:213px;top:192px;width:80px;text-align:right;color:#f0f0f0">已用时间:</div><div class="t" style="left:304px;top:192px;color:#f0f0f0;letter-spacing:.83px">0:00:00</div>
<div class="t" style="left:213px;top:209px;width:80px;text-align:right;color:#f0f0f0">剩余时间:</div><div class="t" style="left:298px;top:209px;color:#f0f0f0;letter-spacing:.75px">00:00:00</div>
<div class="a" style="left:0;top:215px;width:409px;height:20px;background:#4c4c4c"></div>
</div>
<div id="vray" class="a">
  <div id="vtitle" class="a"><svg class="a" style="left:2px;top:7px" width="14" height="16" viewBox="0 0 14 16"><rect x="0" y="0" width="12" height="15" rx="2" fill="#e6eeee"/><text x="2" y="12" font-family="Liberation Sans,sans-serif" font-weight="bold" font-size="13" fill="#1f9a9a">3</text><path d="M3 14h6" stroke="#1f9a9a" stroke-width="1"/></svg><div class="t ui" style="left:18px;top:6px;font-size:12px;line-height:18px;color:#1a1a1a;letter-spacing:.35px">V-Ray 帧缓存区 - [100.0% of 1000 x 750]</div><svg class="a" style="left:1420px;top:0" width="133" height="30" viewBox="1420 14 133 30"><path d="M1435 28.500h10M1480.500 23.500h9v9h-9zM1526 23l10 10M1536 23l-10 10" fill="none" stroke="#111" stroke-width="1.100"/></svg></div>
<div class="a" style="left:0;top:33px;width:28px;height:20px;background:#464646;border-radius:0 3px 0 0"></div><div class="t" style="left:0px;top:36px;font-weight:bold;color:#f2f2f2">历史</div>
<div class="a" style="left:0;top:53px;width:203px;height:34px;background:#373737"></div>
<svg class="a" style="left:0;top:56px" width="135" height="32" viewBox="0 70 135 32">
<path d="M7 75.500H2.500v12h19v-12H17" fill="none" stroke="#dedede" stroke-width="1.600"/><path d="M2 91.500h20" stroke="#7c7c7c" stroke-width="1.600"/><path d="M12 75v10M7 80h10" stroke="#1f5a24" stroke-width="4"/><path d="M12 75.500v9M7.500 80h9" stroke="#5fe05f" stroke-width="2.200"/>
<path d="M37.500 73v22M56.500 73v22" stroke="#5a5a5a" stroke-width="1.200"/><path d="M47 73v22" stroke="#dedede" stroke-width="1.500"/><text x="38.800" y="87" font-family="Liberation Sans,sans-serif" font-weight="bold" font-size="8" fill="#f4f4f4">A</text><text x="49.500" y="87" font-family="Liberation Sans,sans-serif" font-weight="bold" font-size="8" fill="#f4f4f4">B</text><path d="M62 95v4h-4z" fill="#dedede"/>
<path d="M77 75.500h-4.500v12h19v-12H88" fill="none" stroke="#dedede" stroke-width="1.600"/><path d="M72 91.500h20" stroke="#7c7c7c" stroke-width="1.600"/><path d="M77 78.500l4 4 6.500-8" fill="none" stroke="#1f3c5a" stroke-width="4"/><path d="M77 78.500l4 4 6.500-8" fill="none" stroke="#6ab4ea" stroke-width="2.200"/>
<path d="M112 75.500h-4.500v12h19v-12H123" fill="none" stroke="#dedede" stroke-width="1.600"/><path d="M107 91.500h20" stroke="#7c7c7c" stroke-width="1.600"/><path d="M113.500 76l7 7M120.500 76l-7 7" stroke="#5a1f28" stroke-width="4"/><path d="M113.500 76l7 7M120.500 76l-7 7" stroke="#f05a6a" stroke-width="2.200"/>
</svg>
<div class="a" style="left:-2px;top:89px;width:205px;height:17px;background:#464646;border:1px solid #262626;border-radius:3px"></div>
<div class="t" style="left:0;top:90px;color:#7c7c7c!important">查收过滤器</div>
<svg class="a" style="left:170px;top:91px" width="32" height="13" viewBox="0 0 32 13"><circle cx="6" cy="5" r="3.500" fill="none" stroke="#dedede" stroke-width="1.500"/><path d="M8.500 7.500l3.500 4" stroke="#dedede" stroke-width="1.800"/><path d="M20 4h8l-4 4.500z" fill="#5a9acc"/></svg>
<svg class="a" style="left:0;top:108px" width="191" height="775" viewBox="0 122 191 775"><defs><symbol id="hs" viewBox="0 0 191 93" preserveAspectRatio="none">
<rect width="191" height="93" fill="#2a4226"/>
<path d="M0 0h10l-4 6-6 6zM48 0h22l-8 5v14H52z" fill="#b9cbe2"/>
<path d="M8 0h40l6 14-6 12-20 4-18 6H0V12z" fill="#2c4727"/>
<path d="M0 28l14 6v6H0z" fill="#8a929c"/>
<path d="M150 0h41v46h-41z" fill="#2a4426"/>
<path d="M160 8l8-4 6 6 8-3 5 8-6 6-10 2-8-5z" fill="#3a5a34"/>
<path d="M64 4l10-4h34v48H64z" fill="#cfc6bc"/>
<path d="M61 5l13-5" stroke="#3a3a3e" stroke-width="1.500"/>
<path d="M108 0l43 12v36h-43z" fill="#a87650"/>
<path d="M120 2v46M132 6v42M142 9v39" stroke="#96683f" stroke-width="1" opacity=".6"/>
<rect x="85" y="9" width="18" height="17" fill="#262b27"/><rect x="112" y="12" width="17" height="16" fill="#2a2c2a"/>
<path d="M94 14l3 2 2 8h-8z" fill="#56604f" opacity=".7"/><path d="M113 17h6v9h-6z" fill="#4a5466" opacity=".6"/>
<rect x="85" y="32" width="18" height="15" fill="#8b8f8a"/><rect x="112" y="33" width="17" height="15" fill="#7d6c5c"/>
<rect x="34" y="16" width="40" height="8" fill="#c4c9ce"/><path d="M34 16h40M47 16v8M34 20h12" stroke="#eef0f2" stroke-width="1"/>
<rect x="31" y="24" width="46" height="25" fill="#b07c52"/><path d="M31 24.500h47" stroke="#3a2c22" stroke-width="1.500"/>
<rect x="37" y="29" width="20" height="11" fill="#8e9088" stroke="#2a2a2a" stroke-width="1"/><path d="M50 29v11" stroke="#2a2a2a"/>
<rect x="65" y="29" width="11" height="11" fill="#8e9088" stroke="#2a2a2a" stroke-width="1"/>
<rect x="0" y="39" width="31" height="20" fill="#8a4c2a"/><path d="M0 44h31M0 50h31M0 55h31" stroke="#a85c30" stroke-width="1.500" opacity=".7"/>
<path d="M0 34l30 4v5H0z" fill="#3a5a2e"/>
<rect x="31" y="48" width="44" height="8" fill="#4a4f52"/><path d="M33 52h8M44 51h6M54 52h10" stroke="#b8c0c8" stroke-width="2"/>
<rect x="75" y="48" width="72" height="10" fill="#3c5a2a"/><path d="M75 38c4-3 10-3 13 4l-2 8H76z" fill="#2e4828"/>
<rect x="25" y="55" width="39" height="8" fill="#7c7c82"/><rect x="82" y="53" width="5" height="8" fill="#9aa09a"/>
<rect x="0" y="60" width="191" height="33" fill="#345c28"/>
<path d="M0 62h70l-40 20-30 8z" fill="#2f5426"/>
<path d="M62 80h129v13H48z" fill="#467c24"/>
<path d="M64 60h18l-34 33H12z" fill="#8c8c88"/>
<rect x="152" y="33" width="13" height="16" fill="#a2aaa2"/>
<rect x="166" y="43" width="25" height="17" fill="#b8722e"/><path d="M166 48h25M166 54h25" stroke="#8e5420" stroke-width="1" opacity=".7"/>
<path d="M165 48h10v12h-10z" fill="#a06028" opacity=".8"/>
<path d="M148 44c4-6 10-4 11 2l1 12-2 12h-9l-3-10z" fill="#c4d2ea"/><path d="M151 52c2-4 5-3 5 2l-1 10-3 2z" fill="#3c5a36"/><path d="M147 58l4 10 4 2" stroke="#7890b8" stroke-width="1.500" fill="none"/>
<ellipse cx="150" cy="71" rx="22" ry="2.500" fill="#6c6a52" opacity=".8"/>
<rect x="159" y="45" width="3" height="25" fill="#a86a3a"/>
</symbol>
<filter id="hf" x="0" y="0" width="100%" height="100%" color-interpolation-filters="sRGB">
<feTurbulence type="fractalNoise" baseFrequency=".55" numOctaves="2" seed="5" result="n"/>
<feColorMatrix in="n" type="matrix" values="0 0 0 0 0  0 0 0 0 0  0 0 0 0 0  2.8 0 0 0 -1.35" result="m"/>
<feFlood flood-color="#5c8a55" result="f"/><feComposite in="f" in2="m" operator="in" result="sp"/><feComposite in="sp" in2="SourceGraphic" operator="in" result="sp2"/>
<feColorMatrix in="n" type="matrix" values="0 0 0 0 0  0 0 0 0 0  0 0 0 0 0  0 2.6 0 0 -1.15" result="m3"/>
<feFlood flood-color="#1e421f" result="f3"/><feComposite in="f3" in2="m3" operator="in" result="dk"/><feComposite in="dk" in2="SourceGraphic" operator="in" result="dk2"/>
<feMerge><feMergeNode in="SourceGraphic"/><feMergeNode in="dk2"/><feMergeNode in="sp2"/></feMerge></filter>
<filter id="tn" x="0" y="0" width="100%" height="100%"><feTurbulence type="fractalNoise" baseFrequency=".8" numOctaves="2" seed="9"/><feColorMatrix type="matrix" values="0 0 0 0 0  0 0 0 0 0  0 0 0 0 0  0 0 0 2.2 -1"/></filter><filter id="clay"><feColorMatrix type="matrix" values=".27 .5 .1 0 .08  .27 .5 .1 0 .08  .28 .52 .12 0 .1  0 0 0 1 0"/></filter>
<filter id="clay2"><feColorMatrix type="matrix" values=".22 .42 .08 0 .06  .24 .44 .08 0 .08  .27 .48 .1 0 .12  0 0 0 1 0"/></filter>
<filter id="half"><feColorMatrix type="matrix" values=".6 .25 .05 0 .08  .15 .7 .05 0 .08  .15 .3 .5 0 .1  0 0 0 1 0"/></filter>
</defs>
<rect x="0" y="122" width="191" height="775" fill="#111"/>
<rect x="0" y="122" width="191" height="110" fill="#ebebeb"/>
<path filter="url(#hf)" d="M0 155.5 L10 153.5 L20 149.4 L35 143.3 L48 141 L58 143 L66 145 L75 143 L85 140 L95 139.5 L105 141 L115 144 L125 146 L140 147.5 L155 146.5 L170 144.5 L185 142 L191 141.5 V233 H0 Z" fill="#305c2d" stroke="#284c27" stroke-width="1.500" stroke-linejoin="round"/>

<svg x="0" y="233" width="191" height="82" viewBox="0 0 191 82" style="overflow:hidden;position:static"><use href="#hs" x="0" y="0" width="191" height="93"/></svg>
<use href="#hs" x="0" y="343" width="191" height="94"/>
<use href="#hs" x="0" y="454" width="191" height="94"/>
<path d="M0 517h64l-20 16-44 10zM75 512h116v22H62z" fill="#8a9a8a" opacity=".75"/>
<path d="M143 495c4-6 12-4 13 4l1 16h-14z" fill="#6a6460"/>
<use href="#hs" x="0" y="566" width="191" height="93" filter="url(#clay)"/>
<use href="#hs" x="0" y="677" width="191" height="93" filter="url(#clay)"/>
<use href="#hs" x="0" y="788" width="191" height="93" filter="url(#clay2)"/>
<rect x="0" y="233" width="191" height="82" filter="url(#tn)" opacity=".35"/><rect x="0" y="343" width="191" height="94" filter="url(#tn)" opacity=".35"/><rect x="0" y="454" width="191" height="94" filter="url(#tn)" opacity=".3"/><rect x="0" y="566" width="191" height="93" filter="url(#tn)" opacity=".22"/><rect x="0" y="677" width="191" height="93" filter="url(#tn)" opacity=".22"/><rect x="0" y="788" width="191" height="93" filter="url(#tn)" opacity=".22"/><rect x="0" y="566" width="191" height="93" fill="#7a7e8c" opacity=".25"/><rect x="0" y="677" width="191" height="93" fill="#6a7080" opacity=".3"/><rect x="0" y="788" width="191" height="93" fill="#4a5468" opacity=".4"/>
</svg>
<div class="a" style="left:192px;top:108px;width:10px;height:775px;background:#3b3b3b"></div>
<div class="a" style="left:194px;top:108px;width:8px;height:12px;background:#8a8a8a;border-radius:2px"><div class="a" style="left:1px;top:4px;border:3px solid transparent;border-bottom:4px solid #111;border-top:0"></div></div>
<div class="a" style="left:194px;top:123px;width:8px;height:87px;background:#7d7d7d;border-radius:3px"></div>
<div class="a" style="left:194px;top:867px;width:8px;height:14px;background:#8a8a8a;border-radius:2px"><div class="a" style="left:1px;top:5px;border:3px solid transparent;border-top:4px solid #111;border-bottom:0"></div></div>
<div class="a" style="left:202px;top:30px;width:8px;height:859px;background:#484848"></div><div class="a" style="left:211px;top:30px;width:1px;height:859px;background:#505050"></div>
<div class="a" style="left:210px;top:450px;width:3px;height:15px;background:repeating-linear-gradient(#9a9a9a 0 1px,#3b3b3b 1px 2px)"></div>
<div class="t" style="left:227px;top:33px;color:#f0f0f0">文件</div>
<div class="t" style="left:275px;top:33px;color:#f0f0f0">渲染</div>
<div class="t" style="left:323px;top:33px;color:#f0f0f0">图像</div>
<div class="t" style="left:371px;top:33px;color:#f0f0f0">视图</div>
<div class="t" style="left:419px;top:33px;color:#f0f0f0">选项</div>
<div class="a" style="left:216px;top:55px;width:1020px;height:1px;background:#1e1e1e"></div>
<div class="vdd" style="left:216px;top:67px;width:161px;height:18px;line-height:16px;letter-spacing:.2px">RGB color<i style="top:6px"></i></div>
<svg class="a" style="left:386px;top:68px" width="16" height="16" viewBox="0 0 16 16"><circle cx="8" cy="8" r="7" fill="#b0b0b0"/><path d="M8 8V1a7 7 0 0 1 7 7zM8 8v7a7 7 0 0 1-7-7z" fill="#f4f4f4"/></svg>
<svg class="a" style="left:920px;top:62px" width="310" height="30" viewBox="920 76 310 30">
<path d="M925 81h14l5 5v13h-19z" fill="none" stroke="#dedede" stroke-width="1.700"/><path d="M929 81v5h8v-5M929 99v-7h11v7" fill="none" stroke="#dedede" stroke-width="1.400"/><path d="M948 100v3.500h-3.500z" fill="#dedede"/>
<path d="M960 82h11l6 6v11h-17z" fill="none" stroke="#4c4c4c" stroke-width="1.500"/><path d="M971 82v6h6M964 96l8-8" fill="none" stroke="#4c4c4c" stroke-width="1.200"/>
<path d="M994 81h18M994 81v20M1000 81v12M1006 81v8M1012 81v6M994 87h14M994 93h8" fill="none" stroke="#5aa8d8" stroke-width="1.600" stroke-dasharray="2.200 1.800"/><path d="M1003 89l12 5-5 2-2 5z" fill="#f4f4f4"/><circle cx="1001" cy="88" r="1.800" fill="#5aa8d8"/>
<path d="M1030 84v-3h20v3M1030 96v3h14" fill="none" stroke="#8a8a8a" stroke-width="1.400"/><text x="1029.500" y="94.300" font-family="Liberation Sans,sans-serif" font-weight="bold" font-size="10" fill="#f0f0f0" textLength="21" lengthAdjust="spacingAndGlyphs">50%</text><path d="M1053 100v3.500h-3.500z" fill="#dedede"/>
<rect x="1064.500" y="80.500" width="20" height="20" fill="none" stroke="#9aa6b0" stroke-width="1.400"/><rect x="1069.500" y="89.500" width="11" height="7.500" fill="none" stroke="#5aa8d8" stroke-width="1.800"/>
<path d="M1100 83h14v9M1100 83v14h8" fill="none" stroke="#4c4c4c" stroke-width="1.400" stroke-dasharray="3 2"/><path d="M1108 90l9 4-4 1.500-1.500 4z" fill="#4c4c4c"/><path d="M1123 100v3.500h-3.500z" fill="#6a6a6a"/>
<g fill="none" stroke="#4c4c4c" stroke-width="1.4" stroke-linejoin="round"><path d="M1137 88.500h16M1138 88.500c0 5 1 8 3.500 10.500h7c2.500-2.500 3.500-5.500 3.500-10.500"/><path d="M1137.5 90c-4-2.500-5 3-.5 5.500M1152 91l4.500-4 1 .8c-1 3-3 6-6.500 7.500"/><path d="M1140 88c1-3 9-3 10 0M1145 85.500v-2"/></g>
<g fill="none" stroke="#f2f2f2" stroke-width="1.6" stroke-linejoin="round"><path d="M1171 88.500h16M1172 88.500c0 5 1 8 3.500 10.500h7c2.500-2.500 3.500-5.500 3.500-10.500"/><path d="M1171.5 90c-4-2.500-5 3-.5 5.500M1186 91l4.500-4 1 .8c-1 3-3 6-6.500 7.500"/><path d="M1174 88c1-3 9-3 10 0M1179 85.500v-2"/></g><rect x="1180.500" y="90.500" width="9" height="9" fill="#f06a78"/>
<g fill="none" stroke="#4c4c4c" stroke-width="1.4" stroke-linejoin="round"><path d="M1206 88.500h16M1207 88.500c0 5 1 8 3.500 10.500h7c2.500-2.500 3.500-5.500 3.500-10.500"/><path d="M1206.5 90c-4-2.500-5 3-.5 5.500M1221 91l4.500-4 1 .8c-1 3-3 6-6.500 7.500"/><path d="M1209 88c1-3 9-3 10 0M1214 85.500v-2"/></g>
</svg>
<div class="a" style="left:224px;top:106px;width:1000px;height:750px;background:#ebebeb"></div>
<svg class="a" style="left:224px;top:106px;overflow:hidden" width="1000" height="750" viewBox="224 120 1000 750">
<defs>
<filter id="gr" x="-5%" y="-5%" width="110%" height="110%" color-interpolation-filters="sRGB">
<feTurbulence type="fractalNoise" baseFrequency=".45" numOctaves="2" seed="7" result="n"/>
<feDisplacementMap in="SourceGraphic" in2="n" scale="10" xChannelSelector="R" yChannelSelector="G" result="d0"/>
<feGaussianBlur in="d0" stdDeviation=".55" result="d"/>
<feTurbulence type="fractalNoise" baseFrequency=".6" numOctaves="2" seed="3" result="n2"/>
<feColorMatrix in="n2" type="matrix" values="0 0 0 0 0  0 0 0 0 0  0 0 0 0 0  3.2 0 0 0 -1.75" result="m"/>
<feFlood flood-color="#8db586" result="f"/>
<feComposite in="f" in2="m" operator="in" result="sp"/>
<feComposite in="sp" in2="d" operator="in" result="sp2"/>
<feTurbulence type="fractalNoise" baseFrequency=".4" numOctaves="2" seed="11" result="n3"/>
<feColorMatrix in="n3" type="matrix" values="0 0 0 0 0  0 0 0 0 0  0 0 0 0 0  0 3 0 0 -1.25" result="m3"/>
<feFlood flood-color="#1c431f" result="f3"/>
<feComposite in="f3" in2="m3" operator="in" result="dk"/>
<feComposite in="dk" in2="d" operator="in" result="dk2"/>
<feMerge><feMergeNode in="d"/><feMergeNode in="dk2"/><feMergeNode in="sp2"/></feMerge>
</filter>
</defs>
<g filter="url(#gr)" fill="#346632"><path d="M803.3 296.0C801.2 293.8 787.0 288.8 778.3 288.8C769.6 288.8 760.7 293.2 751.0 296.0C741.3 298.8 729.3 302.3 720.0 305.4C710.7 308.5 702.0 311.7 695.0 314.8C688.0 317.9 682.2 320.4 678.0 324.0C673.8 327.6 670.3 332.2 670.0 336.7C669.7 341.2 672.5 346.5 676.0 351.0C679.5 355.5 686.2 359.6 691.0 363.8C695.8 368.0 700.8 371.5 705.0 376.0C709.2 380.5 713.7 386.1 716.0 391.0C718.3 395.9 719.7 400.6 719.0 405.4C718.3 410.2 715.7 416.0 711.7 420.0C707.7 424.0 702.3 427.3 695.0 429.4C687.7 431.5 677.7 432.0 668.0 432.5C658.3 433.0 645.4 431.6 636.7 432.5C628.0 433.4 623.6 435.9 616.0 437.7C608.4 439.4 599.3 440.6 591.0 443.0C582.7 445.4 574.3 448.5 566.0 452.0C557.7 455.5 548.0 459.8 541.0 463.8C534.0 467.8 528.5 472.1 524.0 476.0C519.5 479.9 518.2 482.5 514.0 487.4C509.8 492.3 502.8 498.7 498.5 505.6C494.2 512.5 489.9 521.3 488.0 529.0C486.1 536.7 486.0 544.2 486.9 552.0C487.8 559.8 490.1 567.8 493.3 575.6C496.5 583.4 500.2 591.7 506.3 599.0C512.4 606.3 521.0 613.1 529.6 619.6C538.2 626.1 547.2 632.2 558.0 637.8C568.8 643.4 582.4 649.0 594.5 653.3C606.6 657.6 616.9 660.9 630.7 663.7C644.5 666.5 661.9 668.5 677.4 670.0C692.9 671.5 706.7 672.3 724.0 672.8C741.3 673.3 762.8 673.3 781.0 672.8C799.2 672.3 816.8 671.3 833.0 670.0C849.2 668.7 861.0 667.8 878.3 665.0C895.6 662.2 917.2 657.6 936.7 653.4C956.2 649.2 975.5 644.3 995.0 639.8C1014.5 635.3 1034.0 630.7 1053.4 626.2C1072.9 621.7 1092.3 617.5 1111.7 612.6C1131.1 607.7 1149.5 602.4 1170.0 597.0C1190.5 591.6 1224.2 592.3 1235.0 580.0C1245.8 567.7 1242.6 528.6 1235.0 523.0C1227.4 517.4 1203.6 540.2 1189.5 546.4C1175.4 552.6 1163.6 555.8 1150.6 560.0C1137.6 564.2 1127.9 567.2 1111.7 571.7C1095.5 576.2 1072.9 582.8 1053.4 587.3C1034.0 591.8 1014.5 595.0 995.0 598.9C975.5 602.8 956.2 607.0 936.7 610.6C917.2 614.2 895.6 617.9 878.3 620.3C861.0 622.7 849.2 623.6 833.0 624.8C816.8 626.0 798.3 627.4 781.0 627.4C763.7 627.4 744.2 626.1 729.0 624.8C713.8 623.5 702.9 622.0 690.0 619.6C677.1 617.2 664.0 614.0 651.5 610.6C639.0 607.2 625.8 603.1 615.0 599.0C604.2 594.9 594.9 590.8 586.7 586.0C578.5 581.2 571.6 576.1 566.0 570.4C560.4 564.7 556.0 558.1 553.0 552.0C550.0 545.9 548.2 540.0 547.8 534.0C547.4 528.0 548.2 522.0 550.4 516.0C552.5 510.0 555.9 503.5 560.7 497.8C565.5 492.1 572.5 486.3 579.0 482.0C585.5 477.7 591.0 475.1 599.6 471.9C608.2 468.7 620.0 464.9 630.7 462.8C641.4 460.8 654.1 460.7 663.8 459.6C673.5 458.6 679.4 457.9 688.8 456.5C698.2 455.1 710.6 453.6 720.0 451.0C729.4 448.4 738.4 444.6 745.0 440.8C751.6 437.0 755.9 432.5 759.6 428.0C763.3 423.5 766.0 419.3 767.0 413.8C768.0 408.3 767.4 401.3 765.8 395.0C764.2 388.7 761.3 382.2 757.5 376.0C753.7 369.8 748.6 362.3 743.0 357.5C737.4 352.7 728.5 350.1 724.0 347.0C719.5 343.9 716.7 341.6 716.0 338.8C715.3 336.0 715.9 333.7 720.0 330.4C724.1 327.1 733.2 322.5 740.8 319.0C748.4 315.5 757.5 312.4 765.8 309.6C774.1 306.8 784.5 304.6 790.8 302.3C797.0 300.0 805.4 298.2 803.3 296.0Z"/><path d="M869.8 338.3C871.1 334.9 886.6 328.2 897.8 324.7C908.9 321.1 923.7 319.6 936.7 317.0C949.7 314.4 964.6 311.0 975.6 309.2C986.6 307.4 995.3 304.9 1002.8 306.4C1010.2 307.9 1020.3 315.2 1020.3 318.1C1020.3 321.0 1010.2 321.9 1002.8 323.6C995.3 325.4 984.7 327.0 975.6 328.6C966.5 330.2 956.8 331.5 948.4 333.3C940.0 335.1 920.5 338.1 925.0 339.5C929.5 340.9 957.5 340.1 975.6 341.5C993.8 342.9 1014.5 345.6 1033.9 348.0C1053.4 350.4 1072.8 352.6 1092.3 355.8C1111.8 359.1 1134.4 364.2 1150.6 367.5C1166.8 370.8 1175.4 372.6 1189.5 375.3C1203.6 378.1 1227.4 377.7 1235.0 384.0C1242.6 390.3 1242.6 410.9 1235.0 413.0C1227.4 415.1 1203.6 401.4 1189.5 396.7C1175.4 392.0 1166.8 389.1 1150.6 385.0C1134.4 380.9 1111.8 375.9 1092.3 372.2C1072.8 368.5 1053.4 365.7 1033.9 362.8C1014.5 359.9 993.1 357.1 975.6 355.0C958.1 352.9 943.2 351.7 928.9 350.0C914.6 348.3 899.9 346.9 890.0 345.0C880.1 343.1 868.5 341.7 869.8 338.3Z"/></g>
</svg>
<svg class="a" style="left:223px;top:871px" width="12" height="12" viewBox="0 0 12 12"><path d="M2 9h8M4 8V5h4v3M6 5V2" stroke="#dedede" stroke-width="1.200" fill="none"/><circle cx="3" cy="9" r="1.300" fill="#dedede"/></svg>
<div class="t" style="left:247px;top:870px;font-weight:bold;letter-spacing:.1px;color:#d8d8d8;font-family:'Liberation Mono',monospace;font-size:11px">[870, 48]</div>
<div class="vsep" style="left:335px"></div><div class="vsep" style="left:386px"></div><div class="vsep" style="left:608px"></div><div class="vsep" style="left:788px"></div>
<div class="vdd" style="left:341px;top:870px;width:40px;height:16px">1x1<i></i></div>
<svg class="a" style="left:398px;top:871px" width="12" height="12" viewBox="0 0 12 12"><path d="M2 1v9h9" stroke="#8a8a8a" stroke-width="1.200" fill="none"/><path d="M2 10l5-7" stroke="#8a8a8a" stroke-width="1"/><circle cx="2.500" cy="9.500" r="1.300" fill="#dedede"/></svg>
<div class="t" style="left:422px;top:870px;font-weight:bold;color:#e0e0e0;letter-spacing:-.6px">Raw</div>
<div class="a" style="left:448px;top:870px;width:14px;height:14px;background:#f0f0f0;border-radius:2px"></div>
<div class="t" style="left:472px;top:869px;color:#e05058!important;letter-spacing:.5px">1.000</div><div class="t" style="left:519px;top:869px;color:#4fd04f!important;letter-spacing:.5px">1.000</div><div class="t" style="left:566px;top:869px;color:#4f94d8!important;letter-spacing:.5px">1.000</div>
<div class="vdd" style="left:614px;top:870px;width:45px;height:16px"><span class="cap" style="transform:scaleX(.78)">HSV</span><i></i></div>
<div class="t" style="left:679px;top:870px;color:#d8d8d8">0</div><div class="t" style="left:714px;top:870px;color:#d8d8d8">0.0</div><div class="t" style="left:755px;top:870px;color:#d8d8d8">1.0</div>
<div class="a" style="left:795px;top:869px;width:49px;height:17px;background:#505050"></div>
<div class="t" style="left:805px;top:871px;color:#7e7e7e!important;letter-spacing:1.08px">Rendering image (pass 4) [00:00:03.3] [00:00:27.0 est]</div>
<svg class="a" style="left:1215px;top:873px" width="10" height="10" viewBox="0 0 10 10"><rect x=".5" y=".5" width="9" height="8" fill="#4a7a9c" opacity=".8"/><path d="M2 3h5M2 6h3" stroke="#fff" stroke-width="1.200"/></svg>
<div class="a" style="left:1236px;top:30px;width:1px;height:859px;background:#505050"></div><div class="a" style="left:1238px;top:30px;width:7px;height:859px;background:#474747"></div>
<div class="a" style="left:1235px;top:450px;width:3px;height:15px;background:repeating-linear-gradient(#9a9a9a 0 1px,#3b3b3b 1px 2px)"></div>
<div class="a" style="left:1245px;top:30px;width:303px;height:856px;background:#424242"></div>
<div class="a" style="left:1280px;top:33px;width:36px;height:20px;background:#484848;border-radius:3px 3px 0 0"></div>
<div class="t" style="left:1249px;top:36px;font-weight:bold;color:#4ba8d4!important">层级</div><div class="t" style="left:1286px;top:36px;font-weight:bold;color:#f2f2f2">统计</div>
<div class="a" style="left:1245px;top:53px;width:303px;height:34px;background:#373737"></div>
<svg class="a" style="left:1245px;top:56px" width="250" height="32" viewBox="1245 70 250 32">
<path d="M1252 86.500l5.500 4.700h15l-3.500-3" fill="none" stroke="#8c8c8c" stroke-width="1.700"/><path d="M1252 81.800l5.500 4.700h15l-3.500-3" fill="none" stroke="#e6e6e6" stroke-width="1.700"/><path d="M1262 74v10M1257 79h10" stroke="#1f5a24" stroke-width="3.600"/><path d="M1262 74.500v9M1257.500 79h9" stroke="#5fe05f" stroke-width="2"/><path d="M1276.500 96v4h-4z" fill="#e6e6e6"/>
<path d="M1287 86.500l5.500 4.700h15l-3.500-3" fill="none" stroke="#505050" stroke-width="1.700"/><path d="M1287 81.800l5.500 4.700h15l-3.500-3" fill="none" stroke="#5e5e5e" stroke-width="1.700"/><path d="M1293 75l7 7M1300 75l-7 7" stroke="#5e5e5e" stroke-width="2"/>
<path d="M1321.5 86.500l5.500 4.700h15l-3.500-3" fill="none" stroke="#8c8c8c" stroke-width="1.700"/><path d="M1321.5 81.800l5.500 4.700h15l-3.500-3" fill="none" stroke="#e6e6e6" stroke-width="1.700"/><path d="M1328 74h7l3 3v8h-10z" fill="#5aa8d8"/><rect x="1330" y="74" width="4" height="3.500" fill="#24405c"/><rect x="1330" y="80" width="6" height="5" fill="#dfeaf4"/>
<path d="M1356.5 86.500l5.500 4.700h15l-3.500-3" fill="none" stroke="#8c8c8c" stroke-width="1.700"/><path d="M1356.5 81.800l5.500 4.700h15l-3.500-3" fill="none" stroke="#e6e6e6" stroke-width="1.700"/><path d="M1363 75h4l1.500 1.500h5.500v8.500h-11z" fill="#3f86bc"/><path d="M1363 85l2-5.500h10l-2 5.500z" fill="#8cc4ea"/>
<circle cx="1394.500" cy="79" r="1.500" fill="#e6e6e6"/><circle cx="1394.500" cy="84.700" r="1.500" fill="#5aa8d8"/><circle cx="1394.500" cy="90.400" r="1.500" fill="#e6e6e6"/><path d="M1399 79h13M1399 90.400h13" stroke="#e6e6e6" stroke-width="1.800"/><path d="M1399 84.700h13" stroke="#5aa8d8" stroke-width="1.800"/><path d="M1416.500 96v4h-4z" fill="#e6e6e6"/>
<path d="M1433 86c2-5 9-5 12 0" fill="none" stroke="#5c5c5c" stroke-width="2.200"/><path d="M1430 81v7h7z" fill="#5c5c5c"/>
<path d="M1465 86c3-5 10-5 12 0" fill="none" stroke="#5c5c5c" stroke-width="2.200"/><path d="M1480 81v7h-7z" fill="#5c5c5c"/>
</svg>
<div class="a" style="left:1245px;top:87px;width:303px;height:142px;background:#3a3a3a"></div>
<div class="lrow" style="top:89px"></div><div class="t" style="left:1288px;top:93px;color:#e8e8e8">显示校正</div>
<svg class="a" style="left:1250px;top:94px" width="13" height="9" viewBox="0 0 14 10"><path d="M1 5c3-5 9-5 12 0-3 5-9 5-12 0z" fill="none" stroke="#a0a0a0" stroke-width="1.400"/><circle cx="7" cy="5" r="2.200" fill="none" stroke="#a0a0a0" stroke-width="1.400"/></svg>
<div class="lrow" style="top:110px"></div><div class="t" style="left:1308px;top:114px;color:#e8e8e8">镜头效果</div>
<div class="lrow" style="top:131px"></div><div class="t" style="left:1308px;top:135px;color:#e8e8e8">降噪<span style="letter-spacing:3px">: </span>不可用</div>
<div class="lrow" style="top:151px"></div><div class="t" style="left:1308px;top:155px;color:#e8e8e8">来源<span style="letter-spacing:3px">: </span><span class="cap" style="transform:scaleX(.76)">RGB</span></div>
<svg class="a" style="left:1250px;top:156px" width="13" height="9" viewBox="0 0 14 10"><path d="M1 5c3-5 9-5 12 0-3 5-9 5-12 0z" fill="none" stroke="#a0a0a0" stroke-width="1.400"/><circle cx="7" cy="5" r="2.200" fill="none" stroke="#a0a0a0" stroke-width="1.400"/></svg>
<svg class="a" style="left:1268px;top:89px" width="40" height="84" viewBox="1268 103 40 84">
<rect x="1270.500" y="104.500" width="14" height="14" fill="none" stroke="#b8b8b8" stroke-width="1.200"/><path d="M1273 118c0-7 3-11 10-11.500" fill="none" stroke="#e0e0e0" stroke-width="1.300"/>
<rect x="1290.500" y="125.500" width="14" height="14" fill="none" stroke="#b8b8b8" stroke-width="1.200"/><path d="M1297.500 128v9M1293 132.500h9M1294.500 129.500l6 6M1300.500 129.500l-6 6" stroke="#f0f0f0" stroke-width="1.100"/>
<rect x="1290.500" y="146.500" width="14" height="14" fill="none" stroke="#b8b8b8" stroke-width="1.200"/><path d="M1298 148a6 6 0 0 1 0 11z" fill="#c8c8c8"/><path d="M1297.500 147v13" stroke="#b8b8b8" stroke-width="1"/><path d="M1294 151v5" stroke="#8a8a8a" stroke-width="1" stroke-dasharray="1 1"/>
<rect x="1290.500" y="167.500" width="14" height="14" fill="#3f86c8" stroke="#d0e0f0" stroke-width="1.200"/><circle cx="1297.500" cy="172" r="3.300" fill="#f05060"/><circle cx="1294.500" cy="177" r="3.300" fill="#58d068" opacity=".9"/><circle cx="1300.500" cy="177" r="3.300" fill="#78b8f8" opacity=".9"/>
</svg>
<div class="a" style="left:1245px;top:229px;width:298px;height:1px;background:#555"></div>
<div class="a" style="left:1390px;top:227px;width:17px;height:4px;background:repeating-linear-gradient(90deg,#999 0 1px,#424242 1px 2px)"></div>
<div class="a" style="left:1245px;top:233px;width:303px;height:17px;background:#484848"></div><div class="t" style="left:1251px;top:235px;font-weight:bold;color:#f2f2f2">属性<span style="margin:0 8px 0 2px">:</span>浮沙</div>
<div class="a" style="left:1245px;top:251px;width:303px;height:634px;background:#3a3a3a"></div>
<div class="a" style="left:1548px;top:30px;width:6px;height:859px;background:#484848"></div><div class="a" style="left:1239px;top:885px;width:315px;height:4px;background:#484848"></div>
</div>
<div id="taskbar" class="a"><div class="t ui" style="left:1810px;top:4px;width:32px;text-align:center;color:#fff;font-size:12px">22:43</div>
<div class="t ui" style="left:1790px;top:23px;width:74px;text-align:center;color:#fff;font-size:12px;letter-spacing:.4px">2020-09-03</div>
<svg class="a" style="left:1879px;top:11px" width="18" height="18" viewBox="0 0 18 18"><path d="M1 1h15v12h-9l-3 3v-3H1z" fill="#fff"/><path d="M4 4.500h9M4 7.500h9M4 10.500h5" stroke="#2d2d2d" stroke-width="1.200"/><circle cx="14" cy="12" r="3.200" fill="#2d2d2d" stroke="#fff" stroke-width="1"/></svg>
<div class="a" style="left:1915px;top:0;width:1px;height:40px;background:#8a8a8a"></div></div>
<div class="a" style="left:1114px;top:113px;width:34px;height:34px;border-radius:17px;background:radial-gradient(circle,rgba(228,222,120,.55) 0,rgba(228,222,130,.42) 60%,rgba(232,226,160,0) 100%)"></div>
<svg class="a" style="left:1130px;top:129px" width="14" height="22" viewBox="0 0 14 22"><path d="M1 1v16l4-3.500 3 6.500 2.500-1-3-6.500h5.500z" fill="#fff" stroke="#111" stroke-width="1.100" stroke-linejoin="round"/></svg>
</body>
</html>
